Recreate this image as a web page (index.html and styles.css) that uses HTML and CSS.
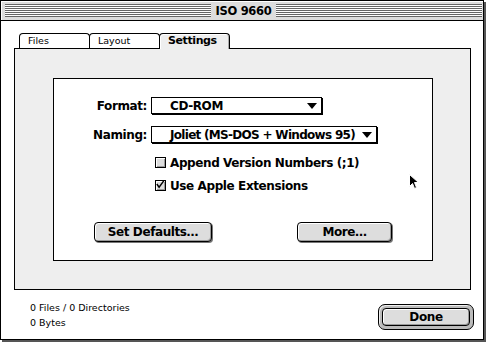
FILE: index.html
```html
<!DOCTYPE html>
<html>
<head>
<meta charset="utf-8">
<title>ISO 9660</title>
<link rel="stylesheet" href="styles.css">
</head>
<body>
<div class="window">
  <div class="titlebar">
    <span class="stripes"></span>
    <span class="title">ISO 9660</span>
    <span class="stripes"></span>
  </div>
  <div class="content">
    <div class="tabs">
      <div class="tab">Files</div>
      <div class="tab">Layout</div>
      <div class="tab active">Settings</div>
    </div>
    <div class="panel">
      <div class="box">
        <div class="row">
          <span class="label">Format:</span>
          <div class="popup popup-format"><span class="ptext">CD-ROM</span><span class="tri"></span></div>
        </div>
        <div class="row row2">
          <span class="label">Naming:</span>
          <div class="popup popup-naming"><span class="ptext">Joliet (MS-DOS + Windows 95)</span><span class="tri"></span></div>
        </div>
        <div class="check first">
          <span class="cb"></span><span>Append Version Numbers (;1)</span>
        </div>
        <div class="check">
          <span class="cb checked"><svg width="11" height="11" viewBox="0 0 11 11"><path d="M2 5 L4.5 8.5 L10 1" fill="none" stroke="#000" stroke-width="1.6"/></svg></span><span>Use Apple Extensions</span>
        </div>
        <div class="buttons">
          <div class="btn btn-defaults">Set Defaults…</div>
          <div class="btn btn-more">More…</div>
        </div>
      </div>
    </div>
    <div class="footer">
      <div class="stats">
        <div>0 Files / 0 Directories</div>
        <div>0 Bytes</div>
      </div>
      <div class="ring"><div class="btn btn-done">Done</div></div>
    </div>
  </div>
</div>
<svg class="cursor" width="12" height="17" viewBox="0 0 12 17"><path d="M0.5 0.5 L0.5 12.5 L3.5 9.5 L5.5 14.5 L7.5 13.5 L5.5 8.5 L9.5 8.5 Z" fill="#000" stroke="#fff" stroke-width="1"/></svg>
</body>
</html>
```
FILE: styles.css
```css
* { box-sizing: border-box; margin: 0; padding: 0; }
body {
  background: #fff;
  width: 487px;
  height: 343px;
  overflow: hidden;
  position: relative;
  font-family: "DejaVu Sans", sans-serif;
  color: #000;
}
.window {
  width: 484px;
  height: 340px;
  border: 1px solid #000;
  box-shadow: 2px 2px 0 #555;
  background: #fff;
  display: flex;
  flex-direction: column;
}
.titlebar {
  height: 20px;
  background: #ddd;
  border-bottom: 1px solid #000;
  display: flex;
  align-items: center;
  padding: 0 1px 0 4px;
  gap: 5px;
  box-shadow: inset 1px 1px 0 #fff;
}
.stripes {
  flex: 1;
  height: 13px;
  background: repeating-linear-gradient(to bottom, #666 0 1px, #fff 1px 2px);
}
.title {
  font-weight: bold;
  font-size: 11.5px;
  letter-spacing: -0.3px;
}
.content {
  flex: 1;
  padding: 12px 0 0 13px;
  display: flex;
  flex-direction: column;
}
.tabs {
  display: flex;
  margin-left: 5px;
  height: 15px;
  align-items: flex-start;
}
.tab {
  width: 71px;
  height: 15px;
  border: 1px solid #000;
  border-bottom: none;
  border-radius: 4px 4px 0 0;
  background: #fff;
  font-size: 9.5px;
  padding-left: 8px;
  line-height: 14px;
}
.tab + .tab { margin-left: -1px; }
.tab.active {
  background: #eee;
  font-weight: bold;
  font-size: 11px;
  letter-spacing: -0.4px;
  height: 16px;
  position: relative;
  z-index: 1;
  box-shadow: inset 1px 1px 0 #fff, inset -1px 0 0 #aaa;
}
.panel {
  width: 457px;
  height: 242px;
  border: 1px solid #000;
  background: #eee;
  padding: 29px 0 0 38px;
}
.box {
  width: 380px;
  height: 183px;
  border: 1px solid #000;
  background: #fff;
  padding-top: 18px;
  font-weight: bold;
  font-size: 12px;
  letter-spacing: -0.4px;
}
.row {
  display: flex;
  align-items: center;
  height: 17px;
}
.row2 { margin-top: 12px; }
.label {
  width: 97px;
  text-align: right;
  padding-right: 4px;
}
.popup {
  height: 17px;
  border: 1px solid #000;
  box-shadow: 1px 1px 0 #000;
  background: #fff;
  display: flex;
  align-items: center;
  justify-content: space-between;
  padding: 0 4px 0 18px;
}
.ptext { white-space: nowrap; }
.popup-format { width: 171px; }
.popup-naming { width: 226px; }
.popup-naming .ptext { letter-spacing: -0.7px; }
.tri {
  flex: none;
  width: 0;
  height: 0;
  border-left: 5px solid transparent;
  border-right: 5px solid transparent;
  border-top: 6px solid #000;
}
.check {
  display: flex;
  align-items: center;
  gap: 4px;
  margin-left: 101px;
  margin-top: 10px;
  height: 13px;
  white-space: nowrap;
}
.check.first { margin-top: 13px; }
.cb {
  width: 11px;
  height: 11px;
  border: 1px solid #000;
  background: #ddd;
  box-shadow: inset 1px 1px 0 #fff, inset -1px -1px 0 #999;
  display: flex;
}
.cb svg { margin: -2px 0 0 -1px; }
.buttons {
  display: flex;
  margin-top: 30px;
  padding-left: 40px;
  gap: 85px;
}
.btn {
  height: 20px;
  border: 1px solid #000;
  border-radius: 4px;
  background: #ddd;
  box-shadow: inset 1px 1px 0 #fff, inset -1px -1px 0 #999, 1px 1px 0 #777;
  display: flex;
  align-items: center;
  justify-content: center;
  font-weight: bold;
  font-size: 12px;
  letter-spacing: -0.4px;
  white-space: nowrap;
}
.btn-defaults { width: 118px; }
.btn-more { width: 95px; }
.footer {
  display: flex;
  justify-content: space-between;
  align-items: flex-start;
  padding-right: 9px;
}
.stats {
  margin-left: 16px;
  margin-top: 10px;
  font-size: 9.5px;
  line-height: 15px;
}
.ring {
  margin-top: 14px;
  width: 96px;
  height: 26px;
  border: 1px solid #000;
  border-radius: 7px;
  background: #bbb;
  padding: 3px;
  box-shadow: inset 1px 1px 0 #eee;
}
.btn-done {
  width: 100%;
  height: 18px;
  box-shadow: inset 1px 1px 0 #fff, inset -1px -1px 0 #999;
}
.cursor {
  position: absolute;
  left: 409px;
  top: 174px;
}
```
